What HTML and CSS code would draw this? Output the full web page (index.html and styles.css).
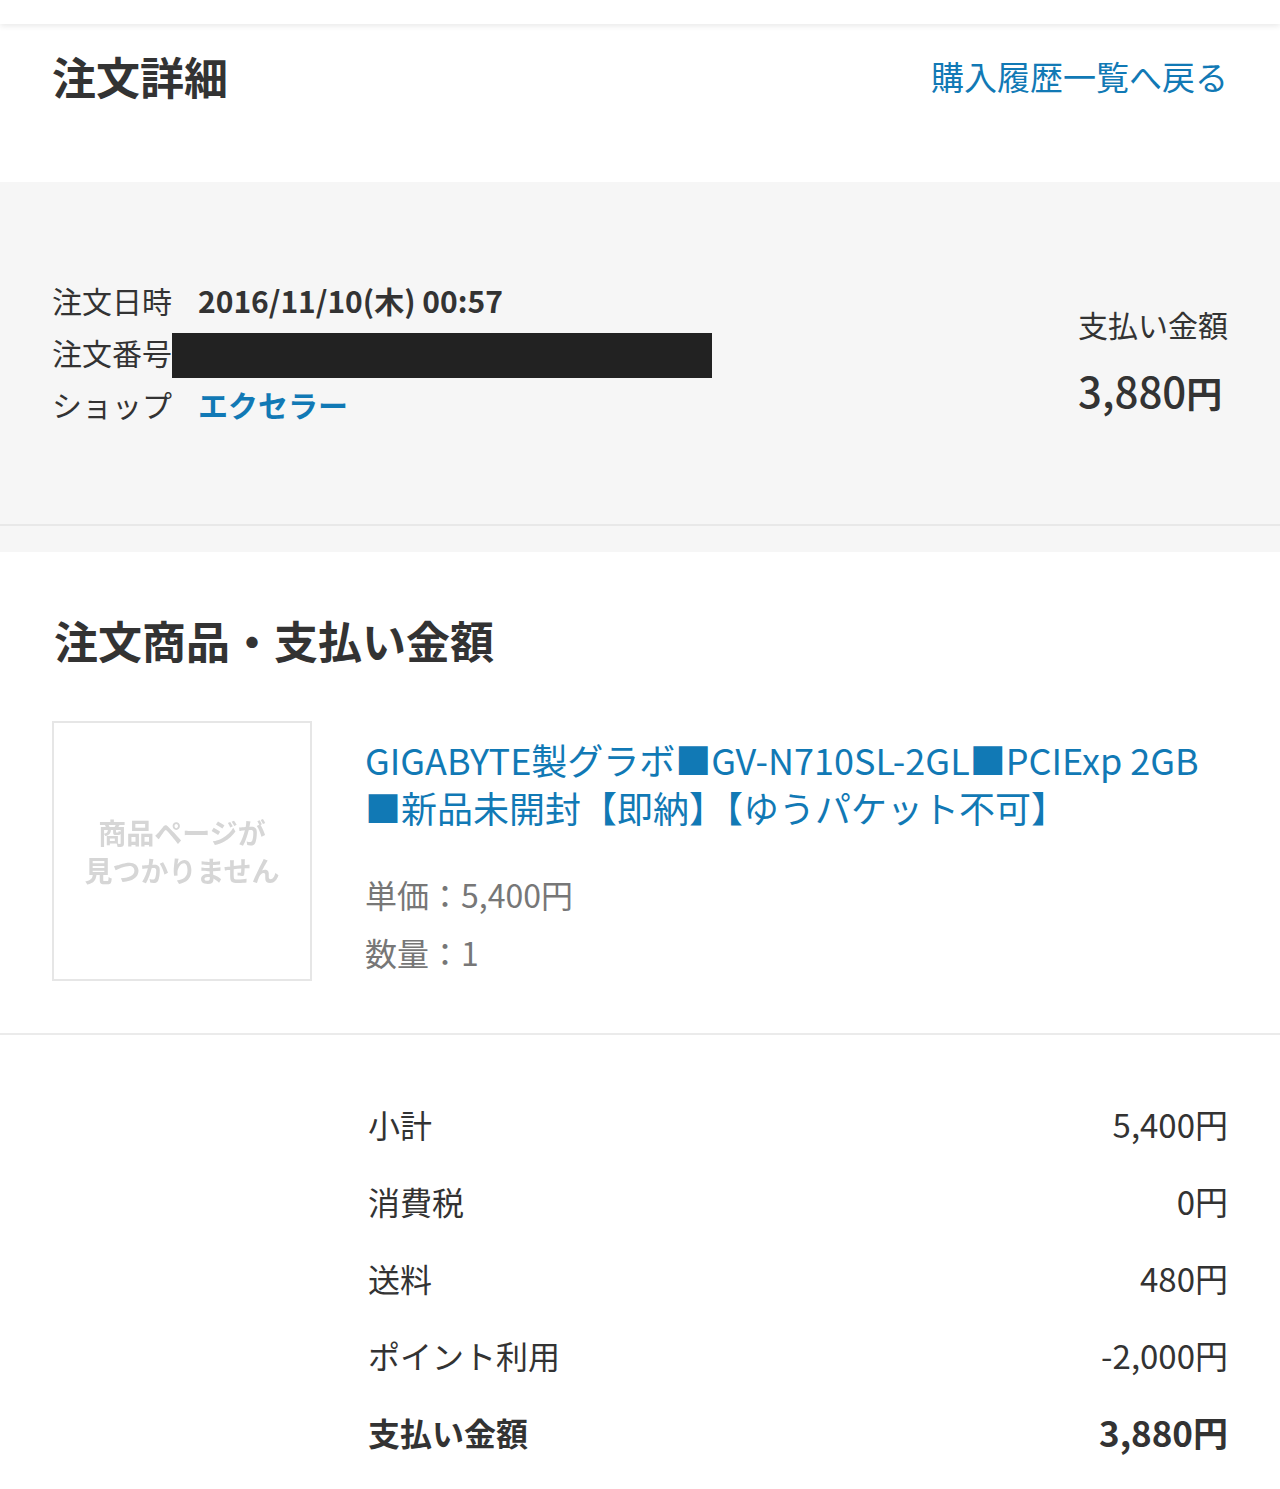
FILE: index.html
```html
<!DOCTYPE html>
<html lang="ja">
<head>
<meta charset="UTF-8">
<meta name="viewport" content="width=device-width, initial-scale=1.0">
<title>注文詳細</title>
<link rel="stylesheet" href="styles.css">
</head>
<body>
<div class="topbar"></div>

<div class="page-head">
    <h1 class="title">注文詳細</h1>
    <a class="back-link" href="#">購入履歴一覧へ戻る</a>
</div>

<div class="summary">
    <div class="info">
        <div class="info-row">
            <span class="info-label">注文日時</span>
            <span class="info-value">2016/11/10(木) 00:57</span>
        </div>
        <div class="info-row">
            <span class="info-label tight">注文番号</span>
            <span class="redacted"></span>
        </div>
        <div class="info-row">
            <span class="info-label">ショップ</span>
            <a class="info-value shop" href="#">エクセラー</a>
        </div>
    </div>
    <div class="pay">
        <div class="pay-label">支払い金額</div>
        <div class="pay-amount">3,880<span class="yen">円</span></div>
    </div>
</div>
<div class="spacer"></div>

<div class="items">
    <h2 class="title">注文商品・支払い金額</h2>
    <div class="item">
        <div class="thumb">
            <span>商品ページが<br>見つかりません</span>
        </div>
        <div class="item-body">
            <a class="item-name" href="#">GIGABYTE製グラボ■GV-N710SL-2GL■PCIExp 2GB ■新品未開封【即納】【ゆうパケット不可】</a>
            <div class="item-meta">
                <div>単価：5,400円</div>
                <div>数量：1</div>
            </div>
        </div>
    </div>
</div>

<div class="totals">
    <div class="total-row"><span>小計</span><span class="amount">5,400円</span></div>
    <div class="total-row"><span>消費税</span><span class="amount">0円</span></div>
    <div class="total-row"><span>送料</span><span class="amount">480円</span></div>
    <div class="total-row"><span>ポイント利用</span><span class="amount">-2,000円</span></div>
    <div class="total-row grand"><span>支払い金額</span><span class="amount">3,880円</span></div>
</div>
</body>
</html>
```

FILE: styles.css
```css
body {
    font-family: "Noto Sans CJK JP", "Noto Sans", sans-serif;
    background-color: #ffffff;
    color: #333333;
    margin: 0;
    padding: 0;
}

a {
    color: #1179b5;
    text-decoration: none;
}

.topbar {
    height: 24px;
    background-color: #ffffff;
    box-shadow: 0 2px 6px rgba(0, 0, 0, 0.09);
    position: relative;
}

.title {
    margin: 0;
    font-size: 44px;
    font-weight: bold;
    line-height: 60px;
    color: #333333;
}

.page-head {
    display: flex;
    justify-content: space-between;
    align-items: center;
    padding: 22px 52px 76px 52px;
}

.back-link {
    font-size: 33px;
    line-height: 60px;
}

/* order info block */
.summary {
    display: flex;
    justify-content: space-between;
    align-items: center;
    background-color: #f6f6f6;
    padding: 92px 52px 94px 52px;
    border-bottom: 2px solid #e8e8e8;
}

.spacer {
    height: 26px;
    background-color: #f6f6f6;
}

.info-row {
    display: flex;
    align-items: center;
    height: 52px;
    font-size: 30px;
}

.info-label {
    margin-right: 26px;
}

.info-label.tight {
    margin-right: 0;
}

.info-value {
    font-weight: bold;
}

.shop {
    color: #1179b5;
}

.redacted {
    display: inline-block;
    width: 540px;
    height: 45px;
    margin-top: 6px;
    background-color: #222222;
}

.pay {
    text-align: left;
    margin-top: 20px;
}

.pay-label {
    font-size: 30px;
    line-height: 40px;
}

.pay-amount {
    font-size: 42px;
    font-weight: 500;
    line-height: 56px;
    margin-top: 18px;
}

.yen {
    font-size: 36px;
    font-weight: bold;
}

/* ordered items */
.items {
    padding: 58px 52px 52px 52px;
    border-bottom: 2px solid #ebebeb;
}

.items .title {
    padding-left: 2px;
}

.item {
    display: flex;
    gap: 53px;
    margin-top: 51px;
}

.thumb {
    flex: 0 0 auto;
    width: 256px;
    height: 256px;
    border: 2px solid #e6e6e6;
    display: flex;
    align-items: center;
    justify-content: center;
    text-align: center;
    font-size: 28px;
    font-weight: bold;
    line-height: 38px;
    color: #d6d6d6;
    filter: blur(0.7px);
}

.item-body {
    flex: 1;
    padding-top: 14px;
}

.item-name {
    display: block;
    font-size: 36px;
    line-height: 48px;
}

.item-meta {
    margin-top: 34px;
    font-size: 32px;
    line-height: 58px;
    color: #777777;
}

/* price breakdown */
.totals {
    padding: 50px 52px 16px 368px;
}

.total-row {
    display: flex;
    justify-content: space-between;
    align-items: center;
    height: 77px;
    font-size: 32px;
}

.total-row .amount {
    font-size: 33px;
}

.total-row.grand {
    font-weight: bold;
}

.total-row.grand .amount {
    font-size: 35px;
}
```
